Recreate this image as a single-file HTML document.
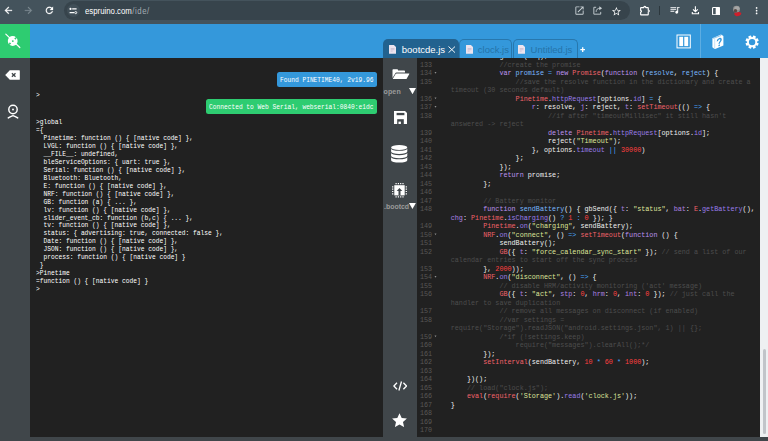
<!DOCTYPE html>
<html><head><meta charset="utf-8">
<style>
*{box-sizing:border-box;margin:0;padding:0}
html,body{width:768px;height:441px;overflow:hidden;background:#212121;font-family:"Liberation Sans",sans-serif}
.abs{position:absolute}
#chrome{left:0;top:0;width:768px;height:24px;background:#44535c}
#pill{left:64px;top:1px;width:566px;height:19px;border-radius:10px;background:#37444c}
#tune{left:66.5px;top:4.2px;width:13px;height:13px;border-radius:50%;background:#414f58}
#url{left:85px;top:5.4px;transform:scaleX(.918);transform-origin:0 0;font-size:8.5px;line-height:12px;color:#fff;white-space:nowrap;letter-spacing:0}
#url span{color:#a3adb3;letter-spacing:.6px;margin-left:.5px}
#toolbar{left:0;top:24px;width:768px;height:34px;background:#3498db}
#conn{left:0;top:24px;width:30px;height:34px;background:#2ecc71}
#lside{left:0;top:58px;width:30px;height:383px;background:#40464a}
#term{left:30px;top:58px;width:353px;height:379px;background:#212121;overflow:hidden}
#rside{left:383px;top:58px;width:34px;height:383px;background:#40464a}
#editor{left:417px;top:58px;width:343px;height:379px;background:#212121;overflow:hidden}
#sbar{left:760px;top:58px;width:8px;height:379px;background:#eef0f2}
#thumb{left:763px;top:349px;width:3px;height:85px;background:#c1c4c9;border-radius:1.5px}
#bottom{left:0;top:437px;width:768px;height:4px;background:#40464a}
.tab{position:absolute;top:39px;height:19px;border-radius:5px 5px 0 0}
#tab1{left:383px;width:76px;background:#22628f}
#tab2{left:459px;width:52.5px;border:1px solid #2777ad;border-bottom:none}
#tab3{left:512.5px;width:65px;border:1px solid #2777ad;border-bottom:none}
.tabt{position:absolute;top:43.6px;font-size:9.5px;line-height:11px;white-space:nowrap}
#vsep{left:700px;top:24px;width:1px;height:34px;background:#5dade2}
.sb{font-weight:bold;font-size:7.050px;line-height:9px;color:#9b9b9b;white-space:nowrap}
.mono{font-family:"Liberation Mono",monospace}
#tt{left:36px;top:118px;padding-top:2px;font-size:29.6px;line-height:31.72px;color:#fff;white-space:pre;transform:scale(.210575,.25);transform-origin:0 0}
#gut{left:0;top:-7px;width:80px;text-align:left;padding-left:12px;padding-top:4px;color:#595856;font-size:26.96px;line-height:34px;white-space:pre;transform:scale(.25);transform-origin:0 0}
#gut div{height:34px;position:relative}
#gut i{position:absolute;left:58.4px;top:12.4px;width:0;height:0;border-left:4.8px solid transparent;border-right:4.8px solid transparent;border-top:7.6px solid #8d8d8d}
#code{left:33px;top:-7px;padding-left:3px;padding-top:4px;color:#f0f0f0;font-size:27.02px;line-height:34px;white-space:pre;transform:scale(.25);transform-origin:0 0}
#code div{height:34px}
#code b{font-weight:normal}
.c{color:#4d4d4d}.k{color:#bd93f0}.d{color:#79b8ff}.r{color:#f0626a}.p{color:#9a7dea}.s{color:#dfe59a}.n{color:#ff4040}.o{color:#4aa8ff}.y{color:#ae82e2}
.bub{position:absolute;height:15px;border-radius:2.5px}
.bub span{position:absolute;left:0;top:.7px;color:#fff;font-size:7.4px;line-height:15px;white-space:pre;transform:scaleX(.8423);transform-origin:0 0}
</style></head><body>
<div class="abs" id="chrome"></div>
<div class="abs" id="pill"></div>
<div class="abs" id="tune"></div>
<div class="abs" id="url">espruino.com<span>/ide/</span></div>

<!-- chrome icons -->
<svg class="abs" style="left:3.2px;top:5.2px" width="10.8" height="10.8" viewBox="0 0 24 24"><path fill="#fff" stroke="#fff" stroke-width=".7" d="M20 11H7.83l5.59-5.59L12 4l-8 8 8 8 1.41-1.41L7.83 13H20v-2z"/></svg>
<svg class="abs" style="left:23.4px;top:5.2px" width="10.8" height="10.8" viewBox="0 0 24 24"><path fill="#7f8b92" stroke="#7f8b92" stroke-width=".4" d="M12 4l-1.41 1.41L16.17 11H4v2h12.17l-5.58 5.59L12 20l8-8z"/></svg>
<svg class="abs" style="left:44px;top:5.3px" width="10.8" height="10.8" viewBox="0 0 24 24"><path fill="#fff" stroke="#fff" stroke-width=".6" d="M17.65 6.35A7.958 7.958 0 0 0 12 4c-4.42 0-7.99 3.58-7.99 8s3.57 8 7.99 8c3.73 0 6.84-2.55 7.73-6h-2.08A5.99 5.99 0 0 1 12 18c-3.31 0-6-2.69-6-6s2.69-6 6-6c1.66 0 3.14.69 4.22 1.78L13 11h7V4l-2.35 2.35z"/></svg>
<svg class="abs" style="left:68px;top:6px" width="10" height="10" viewBox="0 0 10 10"><g stroke="#fff" stroke-width="1.1" fill="none"><path d="M4.2 2.9H8.6M1.6 6.6H6"/></g><circle cx="2.5" cy="2.9" r="1.05" fill="#fff"/><circle cx="7.7" cy="6.6" r="1.05" fill="none" stroke="#fff" stroke-width=".9"/></svg>
<svg class="abs" style="left:574.3px;top:5.3px" width="11" height="11" viewBox="0 0 24 24"><path fill="#c8d0d4" d="M19 19H5V5h7V3H5a2 2 0 0 0-2 2v14a2 2 0 0 0 2 2h14c1.1 0 2-.9 2-2v-7h-2v7zM14 3v2h3.59l-9.83 9.83 1.41 1.41L19 6.41V10h2V3h-7z"/></svg>
<svg class="abs" style="left:592.4px;top:5.3px" width="11" height="11" viewBox="0 0 24 24"><path fill="none" stroke="#c8d0d4" stroke-width="2" d="M9 5H4v15h15v-5M9 15c0-5 3-8 9-8"/><path fill="#c8d0d4" d="M16 2.5l6 4.5-6 4.5z"/></svg>
<svg class="abs" style="left:610.8px;top:5.7px" width="10.8" height="10.8" viewBox="0 0 24 24"><path fill="#fff" d="M22 9.24l-7.19-.62L12 2 9.19 8.63 2 9.24l5.46 4.73L5.82 21 12 17.27 18.18 21l-1.63-7.03L22 9.24zM12 15.4l-3.76 2.27 1-4.28-3.32-2.88 4.38-.38L12 6.1l1.71 4.04 4.38.38-3.32 2.88 1 4.28L12 15.4z"/></svg>
<svg class="abs" style="left:639px;top:4.6px" width="12" height="11" viewBox="0 0 12 11"><path fill="none" stroke="#fff" stroke-width="1.150" stroke-linejoin="round" d="M1.650 3Q1.650 2.550 2.100 2.550H4.900C4.700 1 6.900 1 6.700 2.550H8.800Q9.250 2.550 9.250 3V5.200C10.600 5.100 10.600 6.900 9.250 6.800V9.400Q9.250 9.850 8.800 9.850H2.100Q1.650 9.850 1.650 9.400V7C2.700 7.100 2.700 5.300 1.650 5.400Z"/></svg>
<div class="abs" style="left:659px;top:6.4px;width:1px;height:8.4px;background:#2c373d"></div>
<svg class="abs" style="left:669.15px;top:3.7px" width="11.6" height="11.6" viewBox="0 0 24 24"><path fill="#fff" d="M15 6H3v2h12V6zm0 4H3v2h12v-2zM3 16h8v-2H3v2zM17 6v8.18c-.31-.11-.65-.18-1-.18-1.660 0-3 1.340-3 3s1.340 3 3 3 3-1.340 3-3V8h3V6h-5z"/></svg>
<svg class="abs" style="left:690px;top:5px" width="11" height="11" viewBox="0 0 11 11"><path fill="none" stroke="#fff" stroke-width="1.100" d="M5.400 1.300V6.500M3 4.300L5.400 6.700L7.800 4.300M2.300 7V8.700H8.500V7"/></svg>
<svg class="abs" style="left:711.700px;top:6.600px" width="8.200" height="8.400" viewBox="0 0 8.200 8.400"><rect x=".55" y=".55" width="7.100" height="7.300" rx=".9" fill="none" stroke="#fff" stroke-width="1.100"/><rect x="3.700" y=".55" width="3.950" height="7.300" fill="#fff"/></svg>
<svg class="abs" style="left:731.900px;top:5px" width="10" height="12" viewBox="0 0 10 12"><ellipse cx="4.500" cy="4.200" rx="3.500" ry="3.400" fill="#8e8e8e"/><ellipse cx="4.900" cy="3.300" rx="2.600" ry="2" fill="#a6a6a6"/><ellipse cx="3.500" cy="5.800" rx="1.700" ry="1.700" fill="#5c4b45"/><path d="M2.300 8.300C3.500 7.200 5 7.900 5.800 7.200C7.500 6.800 9.400 7.800 9.300 8.800C9 10.300 6.500 11.400 4.600 11.200C3.200 11 2.200 10 2.300 8.300Z" fill="#cf1f2b"/></svg>
<svg class="abs" style="left:755.100px;top:6px" width="3.200" height="10" viewBox="0 0 3.200 10"><circle cx="1.600" cy="1.900" r=".85" fill="#fff"/><circle cx="1.600" cy="4.650" r=".85" fill="#fff"/><circle cx="1.600" cy="7.400" r=".85" fill="#fff"/></svg>
<div class="abs" id="toolbar"></div>
<div class="abs" id="conn"></div>
<div class="abs" id="vsep"></div>
<div class="tab" id="tab1"></div>
<div class="tab" id="tab2"></div>
<div class="tab" id="tab3"></div>
<div class="tabt" style="left:401.8px;color:#fff">bootcde.js</div>
<div class="tabt" style="left:477.8px;color:#2573a8">clock.js</div>
<div class="tabt" style="left:530.6px;color:#2573a8">Untitled.js</div>
<div class="abs" id="lside"></div>
<div class="abs" id="term">
</div>
<div class="abs mono" style="left:36px;top:91px;padding-top:2px;font-size:29.6px;line-height:31.72px;color:#fff;transform:scale(.210575,.25);transform-origin:0 0">&gt;</div>
<div class="bub mono" style="left:277px;top:72px;width:100px;background:#3498db"><span style="left:3.2px">Found PINETIME40, 2v19.96</span></div>
<div class="bub mono" style="left:205.5px;top:99px;width:171.5px;background:#2ecc71"><span style="left:3.5px">Connected to Web Serial, webserial:0840:e1dc</span></div>
<div class="abs mono" id="tt">&gt;global
={
  Pinetime: function () { [native code] },
  LVGL: function () { [native code] },
  __FILE__: undefined,
  bleServiceOptions: { uart: true },
  Serial: function () { [native code] },
  Bluetooth: Bluetooth,
  E: function () { [native code] },
  NRF: function () { [native code] },
  GB: function (a) { ... },
  lv: function () { [native code] },
  slider_event_cb: function (b,c) { ... },
  tv: function () { [native code] },
  status: { advertising: true, connected: false },
  Date: function () { [native code] },
  JSON: function () { [native code] },
  process: function () { [native code] }
 }
&gt;Pinetime
=function () { [native code] }
&gt;</div>
<div class="abs" id="rside"></div>
<div class="abs" id="editor">
<div class="abs mono" id="gut"><div></div><div>133</div><div>134<i></i></div><div>135</div><div></div><div>136<i></i></div><div>137<i></i></div><div>138</div><div></div><div>139</div><div>140</div><div>141</div><div>142</div><div>143</div><div>144</div><div>145</div><div>146</div><div>147</div><div>148</div><div></div><div>149</div><div>150<i></i></div><div>151</div><div>152</div><div></div><div>153</div><div>154<i></i></div><div>155</div><div>156</div><div></div><div>157</div><div>158</div><div></div><div>159<i></i></div><div>160</div><div>161</div><div>162</div><div>163</div><div>164</div><div>165</div><div>166</div><div>167</div><div>168</div><div>169</div><div>170</div></div>
<div class="abs mono" id="code"><div>            gbSend(req);</div><div>            <b class="c">//create the promise</b></div><div>            <b class="k">var</b> <b class="d">promise</b> <b class="o">=</b> <b class="k">new</b> <b class="r">Promise</b>(<b class="k">function</b> (<b class="d">resolve</b>, <b class="d">reject</b>) {</div><div>                <b class="c">//save the resolve function in the dictionary and create a</b></div><div><b class="c">timeout (30 seconds default)</b></div><div>                <b class="r">Pinetime</b>.<b class="p">httpRequest</b>[options.<b class="p">id</b>] <b class="o">=</b> {</div><div>                    <b class="y">r</b>: resolve, <b class="y">j</b>: reject, <b class="y">t</b>: <b class="r">setTimeout</b>(() <b class="o">=&gt;</b> {</div><div>                        <b class="c">//if after "timeoutMillisec" it still hasn't</b></div><div><b class="c">answered -&gt; reject</b></div><div>                        <b class="k">delete</b> <b class="r">Pinetime</b>.<b class="p">httpRequest</b>[options.<b class="p">id</b>];</div><div>                        reject(<b class="s">"Timeout"</b>);</div><div>                    }, options.<b class="p">timeout</b> <b class="o">||</b> <b class="n">30000</b>)</div><div>                };</div><div>            });</div><div>            <b class="k">return</b> promise;</div><div>        };</div><div></div><div>        <b class="c">// Battery monitor</b></div><div>        <b class="k">function</b> <b class="d">sendBattery</b>() { gbSend({ <b class="y">t</b>: <b class="s">"status"</b>, <b class="y">bat</b>: <b class="r">E</b>.<b class="p">getBattery</b>(),</div><div><b class="y">chg</b>: <b class="r">Pinetime</b>.<b class="p">isCharging</b>() <b class="o">?</b> <b class="n">1</b> <b class="o">:</b> <b class="n">0</b> }); }</div><div>        <b class="r">Pinetime</b>.<b class="p">on</b>(<b class="s">"charging"</b>, sendBattery);</div><div>        <b class="r">NRF</b>.<b class="p">on</b>(<b class="s">"connect"</b>, () <b class="o">=&gt;</b> <b class="r">setTimeout</b>(<b class="k">function</b> () {</div><div>            sendBattery();</div><div>            <b class="r">GB</b>({ <b class="y">t</b>: <b class="s">"force_calendar_sync_start"</b> }); <b class="c">// send a list of our</b></div><div><b class="c">calendar entries to start off the sync process</b></div><div>        }, <b class="n">2000</b>));</div><div>        <b class="r">NRF</b>.<b class="p">on</b>(<b class="s">"disconnect"</b>, () <b class="o">=&gt;</b> {</div><div>            <b class="c">// disable HRM/activity monitoring ('act' message)</b></div><div>            <b class="r">GB</b>({ <b class="y">t</b>: <b class="s">"act"</b>, <b class="y">stp</b>: <b class="n">0</b>, <b class="y">hrm</b>: <b class="n">0</b>, <b class="y">int</b>: <b class="n">0</b> }); <b class="c">// just call the</b></div><div><b class="c">handler to save duplication</b></div><div>            <b class="c">// remove all messages on disconnect (if enabled)</b></div><div>            <b class="c">//var settings =</b></div><div><b class="c">require("Storage").readJSON("android.settings.json", 1) || {};</b></div><div>            <b class="c">/*if (!settings.keep)</b></div><div>                <b class="c">require("messages").clearAll();*/</b></div><div>        });</div><div>        <b class="r">setInterval</b>(sendBattery, <b class="n">10</b> <b class="o">*</b> <b class="n">60</b> <b class="o">*</b> <b class="n">1000</b>);</div><div></div><div>    })();</div><div>    <b class="c">// load("clock.js");</b></div><div>    <b class="r">eval</b>(<b class="r">require</b>(<b class="s">'Storage'</b>).<b class="p">read</b>(<b class="s">'clock.js'</b>));</div><div>}</div><div></div><div></div><div></div></div>
</div>

<!-- toolbar icons -->
<svg class="abs" style="left:4px;top:32px" width="18" height="18" viewBox="0 0 18 18"><path stroke="#fff" stroke-width="1.200" stroke-linecap="round" d="M1.800 2.100L15.800 15.500"/><circle cx="8.700" cy="9" r="4.900" fill="#fff"/><path fill="#2ecc71" d="M13.600 4.200L10.200 6.300L11.600 7.700ZM3.800 13.800L7.200 11.700L5.800 10.300Z"/><circle cx="8.800" cy="9.100" r=".95" fill="#2ecc71"/></svg>
<svg class="abs" style="left:389.3px;top:45.100px" width="7" height="8.800" viewBox="0 0 7 8.800"><path fill="#ece4ef" d="M.3 0H4.900L7 2.100V8.500Q7 8.800 6.700 8.800H.3Q0 8.800 0 8.500V.3Q0 0 .3 0Z"/><path fill="none" stroke="#c6bacd" stroke-width=".75" d="M1.700 3.500H5.500M1.700 4.700H5.500M1.700 6.100H3.700"/></svg><svg class="abs" style="left:465.9px;top:45.100px" width="7" height="8.800" viewBox="0 0 7 8.800"><path fill="#ece4ef" d="M.3 0H4.900L7 2.100V8.500Q7 8.800 6.700 8.800H.3Q0 8.800 0 8.500V.3Q0 0 .3 0Z"/><path fill="none" stroke="#c6bacd" stroke-width=".75" d="M1.700 3.500H5.500M1.700 4.700H5.500M1.700 6.100H3.700"/></svg><svg class="abs" style="left:518.4px;top:45.100px" width="7" height="8.800" viewBox="0 0 7 8.800"><path fill="#ece4ef" d="M.3 0H4.900L7 2.100V8.500Q7 8.800 6.700 8.800H.3Q0 8.800 0 8.500V.3Q0 0 .3 0Z"/><path fill="none" stroke="#c6bacd" stroke-width=".75" d="M1.700 3.500H5.500M1.700 4.700H5.500M1.700 6.100H3.700"/></svg>
<svg class="abs" style="left:447.900px;top:46.100px" width="7.600" height="7.200" viewBox="0 0 7.600 7.200"><path stroke="#fff" stroke-width=".95" d="M.5 .5L7.100 6.700M7.100 .5L.5 6.700"/></svg>
<svg class="abs" style="left:579.500px;top:46.800px" width="5.400" height="5.400" viewBox="0 0 5.400 5.400"><path stroke="#fff" stroke-width="1.300" d="M2.700 .3V5.100M.3 2.700H5.100"/></svg>
<svg class="abs" style="left:676.400px;top:33.700px" width="15.400" height="15" viewBox="0 0 15.400 15"><rect x="1" y="1" width="13.300" height="12.900" fill="none" stroke="#fff" stroke-width="1"/><rect x="3.300" y="2.800" width="3.800" height="9.300" fill="#fff"/><rect x="8.300" y="2.800" width="3.900" height="9.300" fill="#fff"/></svg>
<svg class="abs" style="left:711.800px;top:33.600px" width="12" height="15.600" viewBox="0 0 12 15.600"><path fill="#fff" d="M.4 4.200L9 .6L11.400 1.900V11.600L2.700 15.200L.4 13.200Z"/><path fill="none" stroke="#3498db" stroke-width=".55" d="M1.300 4.500L9.200 1.400"/><path fill="none" stroke="#8cc6ee" stroke-width=".5" d="M2.700 15V5.200"/><g transform="translate(7.100,8.300) skewY(-20)"><path fill="none" stroke="#3498db" stroke-width="1.450" d="M-1.750 -1.700C-1.750 -4.200 1.950 -4.200 1.950 -1.900C1.950 -.3 .1 -.3 .1 1.500"/><circle cx=".1" cy="3.100" r=".85" fill="#3498db"/></g></svg>
<svg class="abs" style="left:745px;top:34.600px" width="14.200" height="14.200" viewBox="-7.100 -7.100 14.200 14.200"><g fill="#fff" transform="rotate(22.500)"><circle r="5"/><rect x="-1.450" y="-6.650" width="2.900" height="13.300" rx=".4"/><rect x="-1.450" y="-6.650" width="2.900" height="13.300" rx=".4" transform="rotate(45)"/><rect x="-1.450" y="-6.650" width="2.900" height="13.300" rx=".4" transform="rotate(90)"/><rect x="-1.450" y="-6.650" width="2.900" height="13.300" rx=".4" transform="rotate(135)"/></g><circle r="3.200" fill="#3498db"/></svg>
<!-- left sidebar icons -->
<svg class="abs" style="left:5.200px;top:70px" width="15" height="10" viewBox="0 0 15 10"><path fill="#fff" d="M4.800 .2H14.200Q14.800 .2 14.800 .8V9.200Q14.800 9.800 14.200 9.800H4.800L.2 5Z"/><path stroke="#40464a" stroke-width="1.300" d="M6.900 3.200L10.500 6.800M10.500 3.200L6.900 6.800"/></svg>
<svg class="abs" style="left:6.700px;top:104px" width="12" height="15.500" viewBox="0 0 12 15.500"><circle cx="6" cy="5.500" r="4.200" fill="none" stroke="#fff" stroke-width="1.450"/><circle cx="6" cy="5.500" r=".95" fill="#fff"/><path fill="none" stroke="#fff" stroke-width="1.500" stroke-linecap="round" stroke-linejoin="round" d="M1.300 13.900Q3.600 12.300 6 11.600Q8.400 12.300 10.700 13.900"/></svg>
<!-- right sidebar icons -->
<svg class="abs" style="left:392.400px;top:68.700px" width="17.600" height="10.600" viewBox="0 0 17.600 10.600"><path fill="#fff" d="M.5 .9Q.5 .2 1.200 .2H5.300Q6 .2 6 .9V1.500H12.300Q13 1.500 13 2.200V3.500H4.600Q3.600 3.500 3.200 4.400L.5 9Z"/><path fill="#fff" d="M4.700 4.400H17Q17.600 4.400 17.300 5L14.500 9.900Q14.200 10.400 13.600 10.400H.9Q.4 10.400 .7 9.900L3.600 5Q4 4.400 4.700 4.400Z"/></svg>
<div class="abs sb" style="left:383.500px;top:87.300px;letter-spacing:.12px">open</div>
<svg class="abs" style="left:408.700px;top:87.900px" width="7" height="6.200" viewBox="0 0 7 6.200"><path fill="#fff" d="M0 0H7L3.500 6.200Z"/></svg>
<svg class="abs" style="left:393.500px;top:110.500px" width="13" height="13" viewBox="0 0 13 13"><path fill="#fff" d="M0 0H11L13 2V13H0Z"/><rect x="2.600" y="1.900" width="7.800" height="2.300" fill="#40464a"/><rect x="3.200" y="8.200" width="6.600" height="4.800" fill="#40464a"/><rect x="4.500" y="10.600" width="2.400" height="2.400" fill="#fff"/></svg>
<svg class="abs" style="left:391.400px;top:144.800px" width="16.400" height="18" viewBox="0 0 16.400 18"><g fill="#fff"><ellipse cx="8.200" cy="2.450" rx="8.100" ry="2.450"/><path d="M.1 3.4A8.1 2.45 0 0 0 16.3 3.4V6.5A8.1 2.45 0 0 1 .1 6.5Z"/><path d="M.1 7.7A8.1 2.45 0 0 0 16.3 7.7V10.7A8.1 2.45 0 0 1 .1 10.7Z"/><path d="M.1 11.9A8.1 2.45 0 0 0 16.3 11.9V15.15A8.1 2.45 0 0 1 .1 15.15Z"/></g></svg>
<svg class="abs" style="left:392.200px;top:183.200px" width="15" height="14.600" viewBox="0 0 15 14.600"><rect x="2.300" y="2.200" width="10.400" height="10.200" fill="#fff"/><path fill="#40464a" d="M7.500 4.900L10.300 8H8.500V12.400H6.500V8H4.700Z"/><path stroke="#fff" stroke-width="1.250" stroke-dasharray="1.200 1.100" d="M3.500 .7H12M3.500 13.900H12M.7 3.300V12M14.300 3.300V12"/></svg>
<div class="abs sb" style="left:384px;top:202.100px;font-size:7.500px;transform:scaleX(.925);transform-origin:0 0">.bootcd</div>
<svg class="abs" style="left:408.900px;top:203.200px" width="6.900" height="6" viewBox="0 0 6.900 6"><path fill="#fff" d="M0 0H6.900L3.450 6Z"/></svg>
<svg class="abs" style="left:392.600px;top:381.300px" width="14.400" height="10" viewBox="0 0 14.400 10"><path fill="none" stroke="#fff" stroke-width="1.300" d="M4 1.800L.9 5L4 8.200M10.400 1.800L13.500 5L10.400 8.200M8.500 .5L5.900 9.500"/></svg>
<svg class="abs" style="left:392px;top:412.700px" width="15" height="14.300" viewBox="0 0 15 14.300"><path fill="#fff" d="M7.500 .2L9.700 5L14.900 5.500L11 9L12.100 14.100L7.500 11.500L2.900 14.100L4 9L.1 5.500L5.300 5Z"/></svg>
<div class="abs" id="sbar"></div>
<div class="abs" id="thumb"></div>
<div class="abs" id="bottom"></div>
</body></html>
